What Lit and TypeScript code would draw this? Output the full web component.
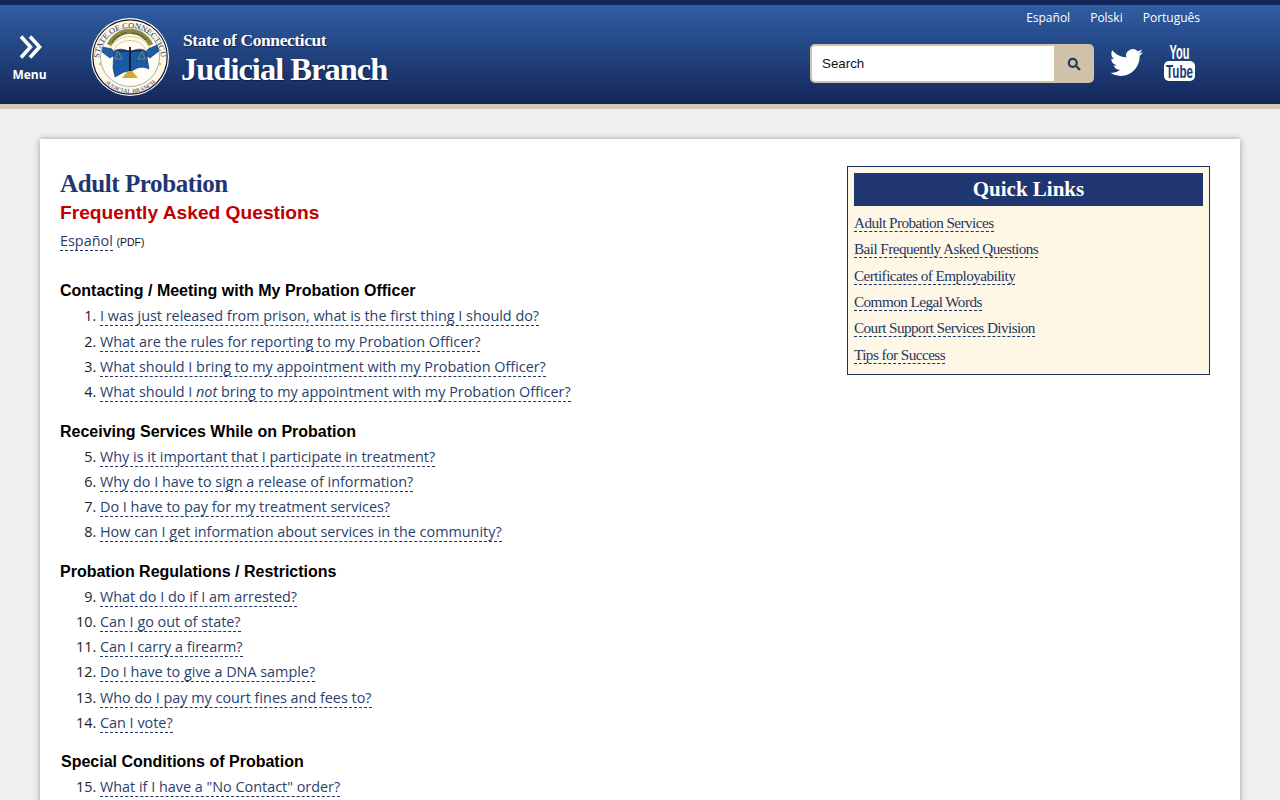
import { LitElement, html, css } from "lit";
import { customElement } from "lit/decorators.js";

const sections: { title: string; start: number; items: unknown[] }[] = [
  { title: "Contacting / Meeting with My Probation Officer", start: 1, items: [
    "I was just released from prison, what is the first thing I should do?",
    "What are the rules for reporting to my Probation Officer?",
    "What should I bring to my appointment with my Probation Officer?",
    html`What should I <em>not</em> bring to my appointment with my Probation Officer?`,
  ]},
  { title: "Receiving Services While on Probation", start: 5, items: [
    "Why is it important that I participate in treatment?",
    "Why do I have to sign a release of information?",
    "Do I have to pay for my treatment services?",
    "How can I get information about services in the community?",
  ]},
  { title: "Probation Regulations / Restrictions", start: 9, items: [
    "What do I do if I am arrested?",
    "Can I go out of state?",
    "Can I carry a firearm?",
    "Do I have to give a DNA sample?",
    "Who do I pay my court fines and fees to?",
    "Can I vote?",
  ]},
  { title: "Special Conditions of Probation", start: 15, items: [
    'What if I have a "No Contact" order?',
  ]},
];

const quick = [
  "Adult Probation Services",
  "Bail Frequently Asked Questions",
  "Certificates of Employability",
  "Common Legal Words",
  "Court Support Services Division",
  "Tips for Success",
];

@customElement("app-root")
export class AppRoot extends LitElement {
  static styles = css`
    :host { display: block; height: 800px; overflow: hidden; background: #efefef; font-family: "Open Sans", sans-serif; }
    a { color: #2a3f6e; text-decoration: none; border-bottom: 1px dashed #1f3263; }
    .top { height: 5px; background: #14275a; }
    header { height: 99px; background: linear-gradient(#2f5ea3, #14275a); border-bottom: 5px solid #d5c7b7; display: flex; color: #fff; }
    .menu { width: 60px; flex: none; display: flex; flex-direction: column; align-items: center; padding-top: 29px; box-sizing: border-box; font: bold 12px "Open Sans", sans-serif; }
    .menu svg { display: block; margin-bottom: 7px; }
    .menu span { line-height: 16px; margin-left: -1px; }
    .seal { margin: 13px 0 0 31px; flex: none; display: block; }
    .brand { margin-left: 14px; padding-top: 24px; font-family: "Liberation Serif", serif; font-weight: bold; text-shadow: 1px 1px 1px #10204a; }
    .brand .s { font-size: 17.5px; line-height: 22px; letter-spacing: -.42px; }
    .brand .j { font-size: 32.5px; line-height: 36px; letter-spacing: -1px; margin-left: -2px; }
    .right { margin-left: auto; width: 400px; padding-right: 80px; display: flex; flex-direction: column; align-items: flex-end; }
    .langs { display: flex; gap: 20px; font-size: 12px; line-height: 18px; padding-top: 4px; }
    .tools { display: flex; align-items: flex-start; margin-top: 17px; width: 390px; }
    .search { width: 284px; height: 39px; box-sizing: border-box; border: 2px solid #d0c2a9; border-radius: 5px; display: flex; background: #d0c2a9; flex: none; }
    .search .in { flex: 1; background: #fff; font: 13.33px "Liberation Sans", sans-serif; color: #111; line-height: 35px; padding-left: 10px; border-radius: 3px 0 0 3px; }
    .search .btn { width: 37px; padding-left: 1px; display: flex; align-items: center; justify-content: center; }
    .tw { margin: 2px 0 0 16px; display: block; flex: none; }
    .yt { margin: -5px 0 0 21px; display: block; flex: none; }
    .card { margin: 30px 40px 0; background: #fff; box-shadow: 0 0 6px rgba(0,0,0,.35); padding: 28px 30px 30px 20px; display: flex; height: 800px; box-sizing: border-box; }
    main { flex: 1; min-width: 0; }
    h1 { margin: 0; font: bold 25px/34px "Liberation Serif", serif; color: #1f3671; letter-spacing: -.4px; }
    h2 { margin: -1px 0 0; font: bold 19.2px/25px "Liberation Sans", sans-serif; color: #c00000; }
    .es { margin-top: 4px; font-size: 14.4px; line-height: 24px; }
    .es small { font: 10.5px "Liberation Sans", sans-serif; color: #111; }
    h3 { margin: 0; font: bold 16px/20px "Liberation Sans", sans-serif; color: #000; }
    section { margin-bottom: 17.35px; }
    section:nth-of-type(1) { margin-top: 28px; }
    section:nth-of-type(3) { margin-top: -.5px; }
    section:nth-of-type(4) { margin-top: -.4px; }
    section:nth-of-type(4) h3 { padding-left: 1px; }
    ol { margin: 2.35px 0 0; padding-left: 40px; font-size: 14.4px; line-height: 25.2px; color: #222; }
    aside { width: 363px; flex: none; align-self: flex-start; box-sizing: border-box; margin-top: -1px; border: 1px solid #1f2f5f; background: #fff7e6; padding: 6px; }
    aside h4 { margin: 0 0 4px; background: #1f3671; color: #fff; text-align: center; font: bold 21px/33px "Liberation Serif", serif; }
    aside div { font: 15.2px/26.35px "Liberation Serif", serif; letter-spacing: -.55px; }
    aside a { color: #24365f; }
  `;

  render() {
    return html`
      <div class="top"></div>
      <header>
        <div class="menu">
          <svg width="26" height="26" viewBox="0 0 26 26" fill="none" stroke="#fff" stroke-width="3.6"><path d="M4 2.5 13.5 13 4 23.5M13 2.5 22.5 13 13 23.5"/></svg>
          <span>Menu</span>
        </div>
        <svg class="seal" width="78" height="78" viewBox="0 0 78 78">
          <defs>
            <path id="arcT" d="M8 41A31 31 0 1 1 70 41"/>
            <path id="arcB" d="M12 63.5A36.5 36.5 0 0 0 66 63.5"/>
            <path id="arcM" d="M21 27A20 20 0 0 1 57 27"/>
          </defs>
          <circle cx="39" cy="39" r="39" fill="#fff"/>
          <circle cx="39" cy="39" r="37.2" fill="#fdf7e4" stroke="#14161d" stroke-width="1.2"/>
          <circle cx="39" cy="39" r="29.5" fill="#fffdf5" stroke="#7d8fb0" stroke-width=".7"/>
          <text font-family="Liberation Serif" font-size="7.6" fill="#1f3671"><textPath href="#arcT" startOffset="1" textLength="100" lengthAdjust="spacingAndGlyphs">STATE OF CONNECTICUT</textPath></text>
          <text font-family="Liberation Serif" font-size="6.2" fill="#1f3671"><textPath href="#arcB" startOffset="3" textLength="56" lengthAdjust="spacingAndGlyphs">JUDICIAL BRANCH</textPath></text>
          <circle cx="9" cy="46" r="1" fill="#d4a83a"/><circle cx="69" cy="46" r="1" fill="#d4a83a"/>
          <path d="M16 26A25 25 0 0 1 62 26L58 28A21 21 0 0 0 20 28Z" fill="#8f8a35"/>
          <path d="M19 30A23 23 0 0 1 59 30L56 33A19 19 0 0 0 22 33Z" fill="#fffbea" stroke="#b59a3c" stroke-width=".5"/>
          <text font-family="Liberation Sans" font-size="2.9" font-weight="bold" fill="#1f3671"><textPath href="#arcM" startOffset="2" textLength="38" lengthAdjust="spacingAndGlyphs">FIDELITY · JUSTICE</textPath></text>
          <path d="M12 29 21 31 24 37 19 40 11 34Z M66 27 57 31 54 37 59 40 68 33Z" fill="#1f5ca6" stroke="#10204a" stroke-width=".5"/>
          <path d="M23 33C28 30 34 31 39 34 44 31 50 30 55 33L58 51C52 48 46 49 41 53L33 54 24 59 22 50Z" fill="#165aa8" stroke="#0f2c60" stroke-width=".6"/>
          <path d="M26 33H52" stroke="#16181e" stroke-width="1.1"/>
          <path d="M39 29V56" stroke="#16181e" stroke-width="1.8"/>
          <path d="M27 33 24 41H31ZM51 33 47 41H54Z" fill="none" stroke="#d4a83a" stroke-width=".6"/>
          <path d="M31 60 37 53H41L47 60Z" fill="#dba52c"/>
        </svg>
        <div class="brand">
          <div class="s">State of Connecticut</div>
          <div class="j">Judicial Branch</div>
        </div>
        <div class="right">
          <div class="langs"><span>Español</span><span>Polski</span><span>Português</span></div>
          <div class="tools">
            <div class="search">
              <div class="in">Search</div>
              <div class="btn"><svg width="14" height="14" viewBox="0 0 14 14" fill="none" stroke="#24365f" stroke-width="2.2"><circle cx="5.8" cy="5.8" r="4"/><path d="M8.8 8.8 13 13"/></svg></div>
            </div>
            <svg class="tw" width="33" height="33" viewBox="0 0 24 24" fill="#fff"><path d="M23.953 4.57a10 10 0 01-2.825.775 4.958 4.958 0 002.163-2.723c-.951.555-2.005.959-3.127 1.184a4.92 4.92 0 00-8.384 4.482C7.69 8.095 4.067 6.13 1.64 3.162a4.822 4.822 0 00-.666 2.475c0 1.71.87 3.213 2.188 4.096a4.904 4.904 0 01-2.228-.616v.06a4.923 4.923 0 003.946 4.827 4.996 4.996 0 01-2.212.085 4.936 4.936 0 004.604 3.417 9.867 9.867 0 01-6.102 2.105c-.39 0-.779-.023-1.17-.067a13.995 13.995 0 007.557 2.209c9.053 0 13.998-7.496 13.998-13.985 0-.21 0-.42-.015-.63A9.935 9.935 0 0024 4.59z"/></svg>
            <svg class="yt" width="31" height="45" viewBox="0 -5 31 45">
              <text x="15.5" y="15" text-anchor="middle" font-family="Liberation Sans" font-weight="bold" font-size="21" fill="#fff" textLength="20" lengthAdjust="spacingAndGlyphs">You</text>
              <rect x="0" y="17" width="31" height="20" rx="5" fill="#fff"/>
              <text x="15.5" y="34" text-anchor="middle" font-family="Liberation Sans" font-weight="bold" font-size="19" fill="#1e3a75" textLength="27" lengthAdjust="spacingAndGlyphs">Tube</text>
            </svg>
          </div>
        </div>
      </header>
      <div class="card">
        <main>
          <h1>Adult Probation</h1>
          <h2>Frequently Asked Questions</h2>
          <div class="es"><a href="#">Español</a> <small>(PDF)</small></div>
          ${sections.map((s) => html`
            <section>
              <h3>${s.title}</h3>
              <ol start=${s.start}>
                ${s.items.map((i) => html`<li><a href="#">${i}</a></li>`)}
              </ol>
            </section>`)}
        </main>
        <aside>
          <h4>Quick Links</h4>
          ${quick.map((q) => html`<div><a href="#">${q}</a></div>`)}
        </aside>
      </div>
    `;
  }
}
